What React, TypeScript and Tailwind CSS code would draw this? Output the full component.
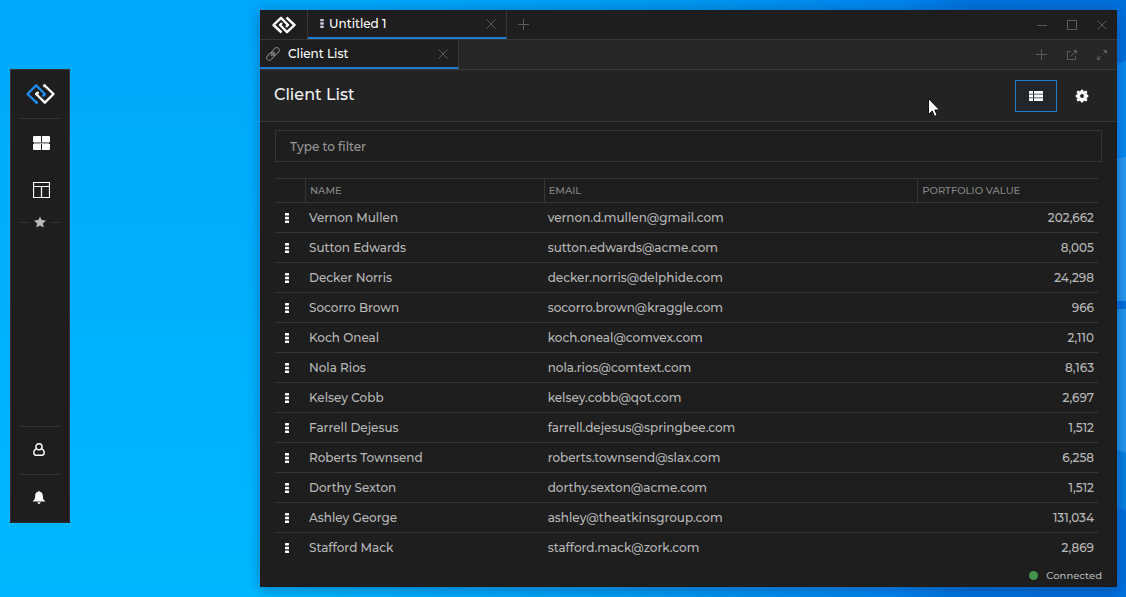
import { useState } from "react";
import type { ReactNode } from "react";

const clients = [
  { name: "Vernon Mullen", email: "vernon.d.mullen@gmail.com", value: 202662 },
  { name: "Sutton Edwards", email: "sutton.edwards@acme.com", value: 8005 },
  { name: "Decker Norris", email: "decker.norris@delphide.com", value: 24298 },
  { name: "Socorro Brown", email: "socorro.brown@kraggle.com", value: 966 },
  { name: "Koch Oneal", email: "koch.oneal@comvex.com", value: 2110 },
  { name: "Nola Rios", email: "nola.rios@comtext.com", value: 8163 },
  { name: "Kelsey Cobb", email: "kelsey.cobb@qot.com", value: 2697 },
  { name: "Farrell Dejesus", email: "farrell.dejesus@springbee.com", value: 1512 },
  { name: "Roberts Townsend", email: "roberts.townsend@slax.com", value: 6258 },
  { name: "Dorthy Sexton", email: "dorthy.sexton@acme.com", value: 1512 },
  { name: "Ashley George", email: "ashley@theatkinsgroup.com", value: 131034 },
  { name: "Stafford Mack", email: "stafford.mack@zork.com", value: 2869 },
];

function Wallpaper() {
  return (
    <svg
      className="absolute inset-0 h-full w-full"
      viewBox="0 0 1126 597"
      preserveAspectRatio="none"
      aria-hidden="true"
    >
      <defs>
        <linearGradient id="sky" x1="0" y1="0" x2="0" y2="1">
          <stop offset="0" stopColor="#00a8fb" />
          <stop offset="1" stopColor="#00b8ff" />
        </linearGradient>
        <linearGradient id="dusk" x1="0" y1="0" x2="1" y2="0">
          <stop offset="0.23" stopColor="#00a4f6" stopOpacity="0" />
          <stop offset="0.6" stopColor="#0098f0" />
          <stop offset="0.8" stopColor="#0085ee" />
          <stop offset="0.86" stopColor="#0072dc" />
          <stop offset="1" stopColor="#0070dc" />
        </linearGradient>
      </defs>
      <rect width="1126" height="597" fill="url(#sky)" />
      <rect width="1126" height="597" fill="url(#dusk)" />
      <path d="M1110 65L1126 61V158H1110Z" fill="#0589f0" />
      <path d="M1110 160L1126 157V301H1110Z" fill="#279af2" />
      <path d="M1110 309H1126V453L1110 449Z" fill="#2294ec" />
      <path d="M1110 449L1126 453V510L1110 505Z" fill="#0580e0" />
    </svg>
  );
}

function Logo({ left, className }: { left: string; className: string }) {
  return (
    <svg viewBox="0 0 86 60" className={className} fill="none" strokeWidth="7" strokeLinecap="round" strokeLinejoin="round" aria-hidden="true">
      <path d="M31 56L4 30L30 4L56 30L51 35" stroke={left} />
      <circle cx="31" cy="55" r="4.5" fill={left} />
      <circle cx="54" cy="32" r="4.5" fill={left} />
      <path d="M55 4L82 30L56 56L30 30L35 26" stroke="#fff" />
      <circle cx="55" cy="5" r="4.5" fill="#fff" />
      <circle cx="32" cy="29" r="4.5" fill="#fff" />
    </svg>
  );
}

function WindowLogo() {
  return (
    <svg viewBox="0 0 24 18" className="h-[18px] w-6" fill="none" stroke="#fff" strokeWidth="2.4" strokeLinejoin="round" aria-hidden="true">
      <path d="M9.5 16.5L1.5 9L9 1.8L16 9L14 11" />
      <path d="M14.5 1.5L22.5 9L15 16.2L8 9L10 7" />
    </svg>
  );
}

function Cross() {
  return (
    <svg viewBox="0 0 10 10" className="size-[10px]" fill="none" stroke="currentColor" aria-hidden="true">
      <path d="M0.5 0.5L9.5 9.5M9.5 0.5L0.5 9.5" />
    </svg>
  );
}

function Plus() {
  return (
    <svg viewBox="0 0 11 11" className="size-[11px]" stroke="currentColor" aria-hidden="true">
      <path d="M5.5 0V11M0 5.5H11" />
    </svg>
  );
}

function Dots({ className }: { className: string }) {
  return (
    <svg viewBox="0 0 4 10" className={className} fill="currentColor" aria-hidden="true">
      <rect width="4" height="2.6" rx="0.5" />
      <rect y="3.7" width="4" height="2.6" rx="0.5" />
      <rect y="7.4" width="4" height="2.6" rx="0.5" />
    </svg>
  );
}

function IconButton({ label, className = "", children }: { label: string; className?: string; children: ReactNode }) {
  return (
    <button type="button" aria-label={label} className={`flex items-center justify-center ${className}`}>
      {children}
    </button>
  );
}

function Launcher() {
  return (
    <nav className="flex h-[454px] w-[60px] shrink-0 flex-col border border-[#303030] bg-[#1e1e1e] px-2 text-white">
      <IconButton label="Home" className="h-[49px] border-b border-[#323232]">
        <Logo left="#1f8ceb" className="h-5 w-[29px]" />
      </IconButton>
      <IconButton label="Applications" className="h-[47px] pl-[2px]">
        <svg viewBox="0 0 17 14" className="h-[14px] w-[17px]" aria-hidden="true">
          <path d="M1 6.5H16V8H1Z" fill="#aaa" />
          <path d="M1 0H7.5Q8 0 8 .5V6.3H0V1Q0 0 1 0ZM9.5 0H16Q17 0 17 1V6.3H9V.5Q9 0 9.5 0ZM0 8H8V14H1Q0 14 0 13ZM9 8H17V13Q17 14 16 14H9Z" fill="#fff" />
        </svg>
      </IconButton>
      <IconButton label="Layouts" className="h-12 pl-[2px]">
        <svg viewBox="0 0 17 16" className="h-4 w-[17px]" fill="none" stroke="#fff" aria-hidden="true">
          <path d="M.5 .5H16.5V15.5H.5ZM.5 4.5H16.5M8.5 4.5V15.5" strokeWidth="1.2" />
        </svg>
      </IconButton>
      <div className="flex h-4 items-center gap-1">
        <span className="h-px flex-1 bg-[#323232]" />
        <svg viewBox="0 0 12 11" className="h-3 w-3" fill="#b9b9b9" aria-hidden="true">
          <path d="M6 0L7.7 3.6L12 4.1L8.9 7L9.7 11L6 9.1L2.3 11L3.1 7L0 4.1L4.3 3.6Z" />
        </svg>
        <span className="h-px flex-1 bg-[#323232]" />
      </div>
      <div className="flex-1" />
      <IconButton label="Account" className="h-12 border-t border-[#323232] pr-[3px] pb-[2px]">
        <svg viewBox="0 0 12 13" className="h-[13px] w-3" fill="none" stroke="#fff" strokeWidth="1.4" aria-hidden="true">
          <circle cx="6" cy="3.8" r="3.1" />
          <path d="M3.3 5.8C1.5 6.4.8 7.8.8 9.8Q.8 12.2 3 12.2H9Q11.2 12.2 11.2 9.8C11.2 7.8 10.5 6.4 8.7 5.8" />
        </svg>
      </IconButton>
      <IconButton label="Notifications" className="h-12 border-t border-[#323232] pr-[2px] pb-[2px]">
        <svg viewBox="0 0 12 13" className="h-[13px] w-3" fill="#fff" aria-hidden="true">
          <path d="M6 0Q6.8 0 6.9 .8C9 1.2 9.8 2.8 9.8 4.8C9.8 7.6 10.4 9 12 10V10.6H0V10C1.6 9 2.2 7.6 2.2 4.8C2.2 2.8 3 1.2 5.1 .8Q5.2 0 6 0ZM4.4 11.2H7.6Q7.4 13 6 13T4.4 11.2Z" />
        </svg>
      </IconButton>
    </nav>
  );
}

function TitleBar() {
  return (
    <header className="flex h-[30px] items-stretch border-b border-[#383838] text-[#5c5c5c]">
      <div className="flex w-12 items-center justify-center border-r border-[#383838]">
        <WindowLogo />
      </div>
      <div className="flex w-[199px] items-center border-r border-b-2 border-r-[#383838] border-b-[#1c7cd0] pr-[10px] pl-3 text-white">
        <Dots className="h-[9px] w-1 text-[#c9c9dd]" />
        <span className="ml-[5px] flex-1 text-[12px] leading-4 font-medium">Untitled 1</span>
        <IconButton label="Close page" className="text-[#5c5c5c]"><Cross /></IconButton>
      </div>
      <IconButton label="New page" className="w-[33px]"><Plus /></IconButton>
      <div className="flex flex-1 justify-end pr-[10px]">
        <div className="flex items-center gap-5">
          <IconButton label="Minimize">
            <svg viewBox="0 0 10 10" className="size-[10px]" stroke="currentColor" aria-hidden="true"><path d="M0 5.5H10" /></svg>
          </IconButton>
          <IconButton label="Maximize">
            <svg viewBox="0 0 10 10" className="size-[10px]" fill="none" stroke="currentColor" aria-hidden="true"><path d="M.5 .5H9.5V9.5H.5Z" /></svg>
          </IconButton>
          <IconButton label="Close window"><Cross /></IconButton>
        </div>
      </div>
    </header>
  );
}

function ViewBar() {
  return (
    <div className="flex h-[30px] items-stretch border-b border-[#383838] bg-[#262626] text-[#5c5c5c]">
      <div className="flex w-[199px] items-center border-r border-b-2 border-r-[#383838] border-b-[#1c7cd0] bg-[#1e1e1e] pr-[10px] pl-[6px]">
        <svg viewBox="0 0 14 14" className="size-[14px]" fill="none" stroke="#858585" aria-hidden="true">
          <g transform="rotate(-45 7 7)">
            <rect x="-0.8" y="4.4" width="8.8" height="5.2" rx="2.6" />
            <rect x="6" y="4.4" width="8.8" height="5.2" rx="2.6" />
            <path d="M4 7H10" />
          </g>
        </svg>
        <span className="ml-2 flex-1 text-[12px] leading-4 font-medium text-white">Client List</span>
        <IconButton label="Close view"><Cross /></IconButton>
      </div>
      <div className="flex flex-1 items-center justify-end gap-5 pr-[10px]">
        <IconButton label="Add view"><Plus /></IconButton>
        <IconButton label="Pop out">
          <svg viewBox="0 0 10 10" className="size-[10px]" fill="none" stroke="currentColor" aria-hidden="true">
            <path d="M4 1.5H.5V9.5H8.5V6M3.5 6.5L9 1" />
            <path d="M6 0H10V4Z" fill="currentColor" stroke="none" />
          </svg>
        </IconButton>
        <IconButton label="Expand">
          <svg viewBox="0 0 10 10" className="size-[10px]" fill="none" stroke="currentColor" aria-hidden="true">
            <path d="M6 4L9 1M1 9L4 6" />
            <path d="M6 0H10V4ZM0 6V10H4Z" fill="currentColor" stroke="none" />
          </svg>
        </IconButton>
      </div>
    </div>
  );
}

function ClientTable({ filter }: { filter: string }) {
  const query = filter.toLowerCase();
  const rows = clients.filter((c) => `${c.name} ${c.email}`.toLowerCase().includes(query));
  return (
    <div className="mt-4 mr-1">
      <table className="w-full table-fixed border-separate border-spacing-0 text-left">
        <thead>
          <tr className="text-[10px] text-[#868686]">
            <th aria-label="Actions" className="h-[25px] w-[30px] border-y border-[#363636] p-0" />
            <th className="w-[29%] border-y border-l border-[#363636] p-0 pl-1 font-medium">NAME</th>
            <th className="w-[45.4%] border-y border-l border-[#363636] p-0 pl-1 font-medium">EMAIL</th>
            <th className="border-y border-l border-[#363636] p-0 pl-1 font-medium">PORTFOLIO VALUE</th>
          </tr>
        </thead>
        <tbody className="text-[12px] leading-4 font-medium text-[#b8b8b8]">
          {rows.map((client) => (
            <tr key={client.name} className="group">
              <td className="h-[30px] border-b border-[#363636] p-0 group-last:border-transparent">
                <IconButton label={`Actions for ${client.name}`} className="w-6 text-white">
                  <Dots className="h-[10px] w-1" />
                </IconButton>
              </td>
              <td className="border-b border-[#363636] p-0 pl-1 group-last:border-transparent">{client.name}</td>
              <td className="border-b border-[#363636] p-0 pl-1 group-last:border-transparent">{client.email}</td>
              <td className="border-b border-[#363636] p-0 pr-1 text-right group-last:border-transparent">
                {client.value.toLocaleString("en-US")}
              </td>
            </tr>
          ))}
        </tbody>
      </table>
    </div>
  );
}

export default function App() {
  const [filter, setFilter] = useState("");
  return (
    <div className="relative flex min-h-screen overflow-hidden bg-[#00adff] font-['Montserrat','Inter',sans-serif]">
      <Wallpaper />
      <div className="relative flex flex-1 items-start py-[10px] pr-[9px] pl-[10px]">
        <div className="shrink-0 pt-[59px]">
          <Launcher />
        </div>
        <main className="ml-[190px] flex min-w-0 flex-1 flex-col self-stretch bg-[#1e1e1e] shadow-[0_2px_12px_rgba(0,30,80,0.4)]">
          <TitleBar />
          <ViewBar />
          <div className="flex h-[52px] items-center border-b border-[#383838] bg-[#232323] pr-[14px] pl-[14px]">
            <h1 className="flex-1 pb-[2px] text-[16px] leading-6 font-medium text-[#f2f2f2]">Client List</h1>
            <IconButton label="Grid view" className="h-8 w-[42px] border border-[#1c7cd0] bg-[#22272b]">
              <svg viewBox="0 0 14 10" className="h-[10px] w-[14px]" fill="#fff" aria-hidden="true">
                <path d="M.4 0H4V2.8H0V.4ZM5 0H13.6L14 .4V2.8H5ZM0 3.6H4V6.4H0ZM5 3.6H14V6.4H5ZM0 7.2H4V10H.4L0 9.6ZM5 7.2H14V9.6L13.6 10H5Z" />
              </svg>
            </IconButton>
            <IconButton label="Settings" className="ml-1 h-8 w-[42px]">
              <svg viewBox="0 0 14 14" className="size-[14px]" aria-hidden="true">
                <g stroke="#fff" strokeWidth="3" strokeLinecap="round">
                  <path d="M7 2V12M2 7H12M3.2 3.2L10.8 10.8M10.8 3.2L3.2 10.8" />
                </g>
                <circle cx="7" cy="7" r="5.2" fill="#fff" />
                <circle cx="7" cy="7" r="1.9" fill="#232323" />
              </svg>
            </IconButton>
          </div>
          <section className="flex-1 px-[15px] pt-2">
            <input
              type="text"
              aria-label="Type to filter"
              placeholder="Type to filter"
              value={filter}
              onChange={(e) => setFilter(e.target.value)}
              className="block h-8 w-full border border-[#363636] bg-transparent px-[14px] text-[12px] font-medium text-[#d0d0d0] outline-none placeholder:text-[#999]"
            />
            <ClientTable filter={filter} />
          </section>
          <footer className="flex h-6 items-center justify-end gap-2 pr-[15px] text-[10px] font-medium text-[#b8b8b8]">
            <span className="size-[9px] rounded-full bg-[#43934a]" />
            <span>Connected</span>
          </footer>
        </main>
      </div>
      <svg viewBox="0 0 12 19" className="pointer-events-none absolute top-[98px] left-[928px] h-[19px] w-3" aria-hidden="true">
        <path d="M.5 .5V16.5L4.2 13L6.6 18.4L9.2 17.3L6.8 12H11.5Z" fill="#fff" stroke="#111" />
      </svg>
    </div>
  );
}
